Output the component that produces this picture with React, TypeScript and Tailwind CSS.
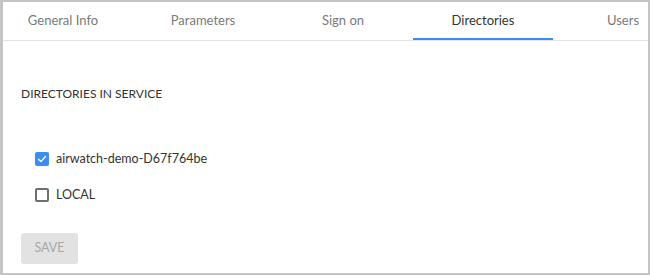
import { useState } from 'react'

const TABS = ['General Info', 'Parameters', 'Sign on', 'Directories', 'Users']

const DIRECTORIES = [
  { name: 'airwatch-demo-D67f764be', checked: true },
  { name: 'LOCAL', checked: false },
]

function Checkbox({ checked }: { checked: boolean }) {
  if (checked) {
    return (
      <span className="flex h-[14px] w-[14px] items-center justify-center rounded-[2px] bg-[#3b8ef0]">
        <svg width="10" height="10" viewBox="0 0 10 10" fill="none">
          <path d="M1.5 5.2 L4 7.5 L8.5 2.5" stroke="white" strokeWidth="1.3" strokeLinecap="round" strokeLinejoin="round" />
        </svg>
      </span>
    )
  }
  return <span className="h-[14px] w-[14px] rounded-[2px] border-2 border-[#6e6e6e] bg-white" />
}

export default function App() {
  const [active] = useState('Directories')

  return (
    <div
      className="h-[275px] w-[650px] overflow-hidden border-t-2 border-r-2 border-b-2 border-l-[3px] border-[#c4c4c4] bg-white"
      style={{ fontFamily: 'Lato, "Open Sans", sans-serif' }}
    >
      {/* Tabs */}
      <div className="flex h-[39px] overflow-hidden border-b border-[#e3e3e3]">
        <div className="-ml-[10px] flex shrink-0">
          {TABS.map((t) => (
            <div
              key={t}
              className={
                'flex w-[140px] shrink-0 items-center justify-center border-b-2 pt-[2px] text-[13px] ' +
                (t === active ? 'border-[#3b8ef0] text-[#333]' : 'border-transparent text-[#7a7a7a]')
              }
            >
              {t}
            </div>
          ))}
        </div>
      </div>

      <div className="px-[18px] pt-[46px]">
        <h2 className="text-[12px] leading-[14px] text-[#333]">DIRECTORIES IN SERVICE</h2>

        <ul className="mt-[51px] space-y-[22px] pl-[14px]">
          {DIRECTORIES.map((d) => (
            <li key={d.name} className="flex items-center gap-[7px] text-[12.5px] leading-[14px] text-[#333]">
              <Checkbox checked={d.checked} />
              {d.name}
            </li>
          ))}
        </ul>

        <button
          disabled
          className="mt-[31px] h-[31px] w-[57px] rounded-[3px] bg-[#e2e2e2] text-[12.5px] text-[#a8a8a8]"
        >
          SAVE
        </button>
      </div>
    </div>
  )
}
